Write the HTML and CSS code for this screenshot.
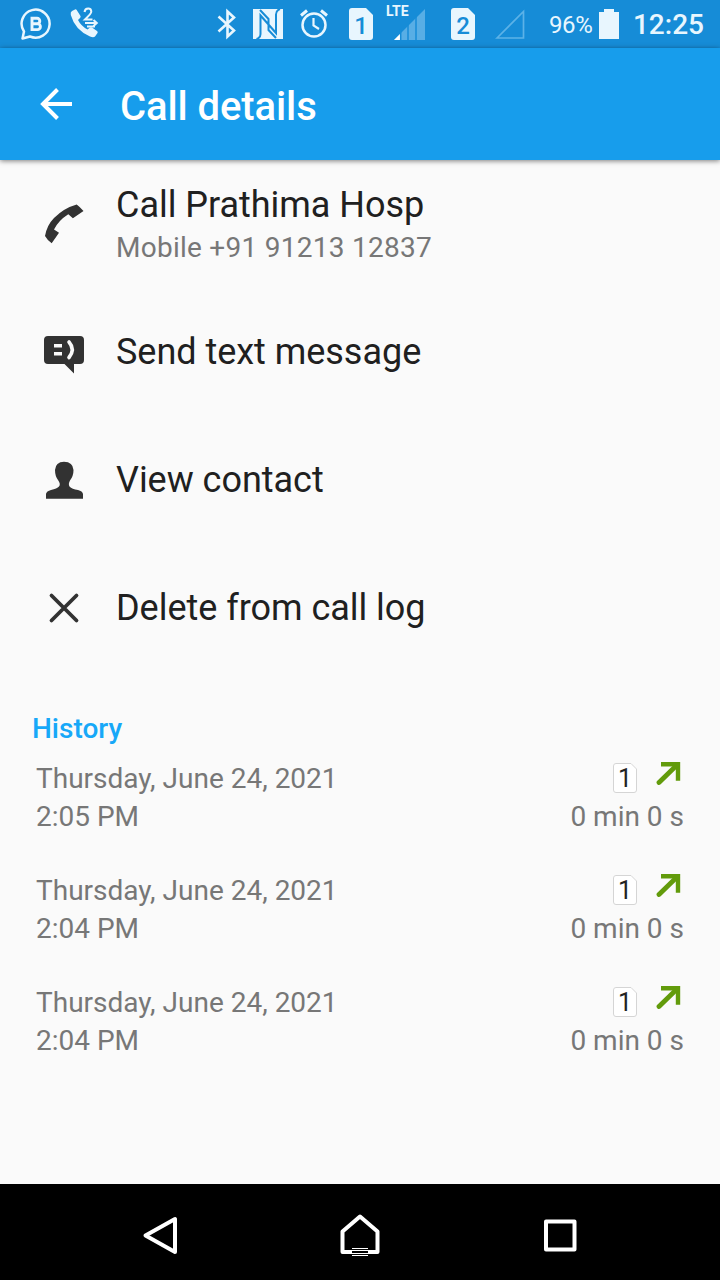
FILE: index.html
```html
<!DOCTYPE html>
<html lang="en">
<head>
<meta charset="utf-8">
<title>Call details</title>
<link rel="stylesheet" href="styles.css">
</head>
<body>
<svg class="defs" width="0" height="0">
  <symbol id="outgoing" viewBox="0 0 26 26"><path d="M5 4.200H22V20.700" fill="none" stroke="#629b0b" stroke-width="4.400"/><path d="M21.500 4.500L3 22.500" fill="none" stroke="#629b0b" stroke-width="4.800" stroke-linecap="round"/></symbol>
  <symbol id="sim" viewBox="0 0 24 32"><path d="M3 0H17L24 7V29Q24 32 21 32H3Q0 32 0 29V3Q0 0 3 0Z"/></symbol>
  <symbol id="sim-line" viewBox="0 0 24 31"><path d="M3 .5H18L23.500 6V27Q23.500 29.500 21 29.500H3Q.5 29.500 .5 27V3Q.5 .5 3 .5Z"/></symbol>
</svg>
<div class="screen">
  <header class="status">
    <div class="status-left">
      <svg class="wa" viewBox="0 0 34 34" width="34" height="34"><path d="M4 24.500A14 14 0 1 1 10 29.500L2.500 31.500Z" fill="none" stroke="currentColor" stroke-width="2.500" stroke-linejoin="round"/><path d="M12 11.200H17A2.800 2.800 0 0 1 17 16.800H12ZM12 16.800H17.500A2.900 2.900 0 0 1 17.500 22.600H12Z" fill="none" stroke="currentColor" stroke-width="2.900"/></svg>
      <svg class="conf" viewBox="0 0 30 34" width="30" height="34"><path d="M2 4L5 2.500Q6 2 6.700 3L10.500 9Q11 10 10 11L8 13Q11 19 17.500 22.500L20 20.500Q21 20 22 20.500L27 24Q28.200 25 27.500 26L25 29.500Q23.500 31 20 29.500Q5 23 .8 8Q.2 5 2 4Z" fill="currentColor"/><path d="M14.500 5Q15 1.500 18.200 1.500Q21.300 1.500 21.300 4.800Q21.300 6.500 15 12.500H22.500M15 16H26M23.500 13L26.800 16L23.500 19M17 19.500H25" fill="none" stroke="currentColor" stroke-width="2"/></svg>
    </div>
    <div class="status-right">
      <svg class="bt" viewBox="0 0 20 32" width="20" height="32"><path d="M1.500 8.500L17 22.500L10.500 28.500V3.500L17 9.500L1.500 23.500" fill="none" stroke="currentColor" stroke-width="2.600"/></svg>
      <svg class="nfc" viewBox="0 0 30 30" width="30" height="30"><path d="M0 0H30V30H0Z" fill="currentColor"/><path d="M3.500 30Q7.500 29 7.500 25V6.500L15.500 15.500V21L23 29M27 0Q23 1.500 23 5.500V24L15.500 15.500V10L7 1" fill="none" stroke="#168cd7" stroke-width="2"/></svg>
      <svg class="alarm" viewBox="0 0 28 30" width="28" height="30"><g fill="none" stroke="currentColor"><circle cx="14" cy="16" r="11.500" stroke-width="2.500"/><path d="M13.500 9V16.500L19 20" stroke-width="2.200"/><path d="M1 6.500L7 1.500M27 6.500L21 1.500" stroke-width="3"/></g></svg>
      <span class="sim s1"><svg viewBox="0 0 24 32" width="24" height="32"><use href="#sim"/></svg><b>1</b></span>
      <span class="signal"><b>LTE</b><svg viewBox="0 0 31 31" width="31" height="31"><path d="M0 31L31 0V31Z" fill="#58aee5"/><path d="M0 31L6 25V31Z" fill="#fff"/><path d="M6.700 20V31M14 14V31M22 6V31" stroke="#168cd7" stroke-width="1.500"/></svg></span>
      <span class="sim s2"><svg viewBox="0 0 24 32" width="24" height="32"><use href="#sim"/></svg><b>2</b></span>
      <svg class="nosig" viewBox="0 0 30 30" width="30" height="30"><path d="M2 29L28.500 2.500V29Z" fill="none" stroke="#5cb2e7" stroke-width="1.700"/></svg>
      <span class="percent">96%</span>
      <svg class="battery" viewBox="0 0 20 30" width="20" height="30"><path d="M5 0H15V3H20V30H0V3H5Z" fill="currentColor"/></svg>
      <time class="clock">12:25</time>
    </div>
  </header>
  <div class="toolbar">
    <svg class="back" viewBox="0 0 34 34" width="34" height="34"><path d="M32 17H4M17.500 2.500L3 17L17.500 31.500" fill="none" stroke="#fff" stroke-width="4"/></svg>
    <h1 class="title">Call details</h1>
  </div>
  <main class="content">
    <div class="action">
      <svg class="action-icon" viewBox="0 0 40 40"><path d="M1 32Q3 21 10 14Q20 4 32.700 .5Q36 3 39.500 7L28.900 14.300L24.300 10.300Q14.500 16.500 10 25.500L15 28.700L7.700 39.300Q3.500 36.500 1 32Z"/></svg>
      <div class="action-text"><div class="label">Call Prathima Hosp</div><div class="sub">Mobile +91 91213 12837</div></div>
    </div>
    <div class="action">
      <svg class="action-icon" viewBox="0 0 40 40"><path d="M4 4H36Q40 4 40 8V28Q40 32 36 32H30V41.500L20.500 32H4Q0 32 0 28V8Q0 4 4 4Z"/><path d="M10 13.700H18M10 21.800H18" stroke="#fafafa" stroke-width="3.600"/><path d="M25 10Q31.500 17.500 25 25.500" fill="none" stroke="#fafafa" stroke-width="3.600" stroke-linecap="round"/></svg>
      <div class="label">Send text message</div>
    </div>
    <div class="action">
      <svg class="action-icon" viewBox="0 0 40 40"><path d="M2 38.700V34Q2.500 31 7 30Q13 28.500 15 26.500Q17 24 14 20Q11 16 11 10Q11.500 2 20 1.800Q29 2 29.500 10Q29.500 16 26 20.500Q24 24 25.500 26.500Q28 29 34 30Q38.500 31 39 34V38.700Z"/></svg>
      <div class="label">View contact</div>
    </div>
    <div class="action">
      <svg class="action-icon" viewBox="0 0 40 40"><path d="M7.500 7.500L32.500 32.500M32.500 7.500L7.500 32.500" stroke="#323232" stroke-width="3.800" stroke-linecap="round"/></svg>
      <div class="label">Delete from call log</div>
    </div>
    <h2 class="history-title">History</h2>
    <div class="history">
      <div class="entry"><div>Thursday, June 24, 2021<br>2:05 PM</div><div class="detail"><div class="marks"><span class="sim-badge"><svg viewBox="0 0 24 31"><use href="#sim-line"/></svg><b>1</b></span><svg class="arrow"><use href="#outgoing"/></svg></div><div>0 min 0 s</div></div></div>
      <div class="entry"><div>Thursday, June 24, 2021<br>2:04 PM</div><div class="detail"><div class="marks"><span class="sim-badge"><svg viewBox="0 0 24 31"><use href="#sim-line"/></svg><b>1</b></span><svg class="arrow"><use href="#outgoing"/></svg></div><div>0 min 0 s</div></div></div>
      <div class="entry"><div>Thursday, June 24, 2021<br>2:04 PM</div><div class="detail"><div class="marks"><span class="sim-badge"><svg viewBox="0 0 24 31"><use href="#sim-line"/></svg><b>1</b></span><svg class="arrow"><use href="#outgoing"/></svg></div><div>0 min 0 s</div></div></div>
    </div>
  </main>
  <nav class="nav">
    <svg viewBox="0 0 48 48"><path d="M9.500 23.500L39 7V40Z"/></svg>
    <svg viewBox="0 0 48 48"><path d="M6.500 40V19.500L24 4.500L41.500 19.500V40Z"/><path d="M16 36H32V44H16Z" class="gap"/><path d="M16 36.500H32M16 38.500H32M16 41.500H32M16 43.500H32" class="stripes"/></svg>
    <svg viewBox="0 0 48 48"><path d="M10 9.500H38.500V37.500H10Z"/></svg>
  </nav>
</div>
</body>
</html>
```
FILE: styles.css
```css
* { box-sizing: border-box; }
body { margin: 0; font-family: Roboto, "Noto Sans", sans-serif; background: #fafafa; }
svg { display: block; flex: none; }
.defs { position: absolute; }
.screen { width: 720px; height: 1280px; display: flex; flex-direction: column; background: #fafafa; overflow: hidden; }

.status { height: 48px; flex: none; display: flex; justify-content: space-between; padding: 0 16px 0 20px; background: #168cd7; color: #e8f6fe; }
.status-left, .status-right { display: flex; align-items: center; }
.conf { margin-left: 16px; }
.nfc { margin-left: 16px; }
.alarm { margin-left: 17px; }
.sim { display: grid; width: 24px; height: 32px; fill: #e8f6fe; }
.sim > * { grid-area: 1 / 1; }
.sim b { font-size: 24px; font-weight: 500; line-height: 36px; text-align: center; color: #168cd7; }
.s1 { margin-left: 21px; }
.signal { display: flex; flex-direction: column; width: 39px; height: 48px; margin-left: 13px; padding-top: 3px; }
.signal b { font-size: 14px; font-weight: 700; line-height: 17px; height: 6px; }
.signal svg { margin-left: 8px; }
.s2 { margin-left: 26px; }
.nosig { margin-left: 20px; }
.percent { margin-left: 24px; font-size: 24px; line-height: 28px; padding-top: 2px; letter-spacing: -.4px; width: 43px; }
.battery { margin-left: 7px; }
.clock { margin-left: 14px; font-size: 28px; font-weight: 500; line-height: 34px; padding-top: 2px; }

.toolbar { height: 112px; flex: none; display: flex; align-items: center; padding-left: 40px; background: #179dec; box-shadow: 0 1px 5px rgba(0,0,0,.5); }
.title { margin: 5px 0 0 46px; font-size: 40px; line-height: 48px; font-weight: 500; letter-spacing: -.1px; color: #fff; }

.content { flex: 1; }
.action { height: 128px; display: flex; align-items: center; padding-left: 44px; gap: 32px; }
.action-icon { width: 40px; height: 40px; fill: #323232; overflow: visible; }
.action-text { padding-bottom: 1px; }
.label { font-size: 36px; line-height: 42px; letter-spacing: -.03px; color: #202020; white-space: nowrap; }
.sub { margin-top: 5px; font-size: 28px; line-height: 33px; letter-spacing: .26px; color: #777; }
.history-title { margin: 40px 0 0 32px; font-size: 28px; line-height: 33px; font-weight: 500; color: #17a8f8; }
.history { display: flex; flex-direction: column; gap: 36px; padding: 15px 36px 0; }
.entry { display: flex; justify-content: space-between; font-size: 28px; line-height: 38px; color: #777; }
.detail { text-align: right; }
.marks { display: flex; justify-content: flex-end; gap: 19px; height: 38px; padding: 2px 2px 0 0; }
.sim-badge { display: grid; width: 24px; height: 31px; margin-top: 1px; }
.sim-badge > * { grid-area: 1 / 1; }
.sim-badge svg { width: 24px; height: 31px; fill: #fff; stroke: #d5d5d5; }
.sim-badge b { font-size: 25px; font-weight: 400; line-height: 32px; text-align: center; color: #222; }
.arrow { width: 26px; height: 26px; margin-top: -2px; }

.nav { height: 96px; flex: none; display: flex; align-items: flex-start; justify-content: center; gap: 152px; padding-top: 28px; background: #000; }
.nav svg { width: 48px; height: 48px; fill: none; stroke: #fff; stroke-width: 4; stroke-linejoin: round; }
.nav .gap { fill: #000; stroke: none; }
.nav .stripes { stroke-width: 1; }
```
